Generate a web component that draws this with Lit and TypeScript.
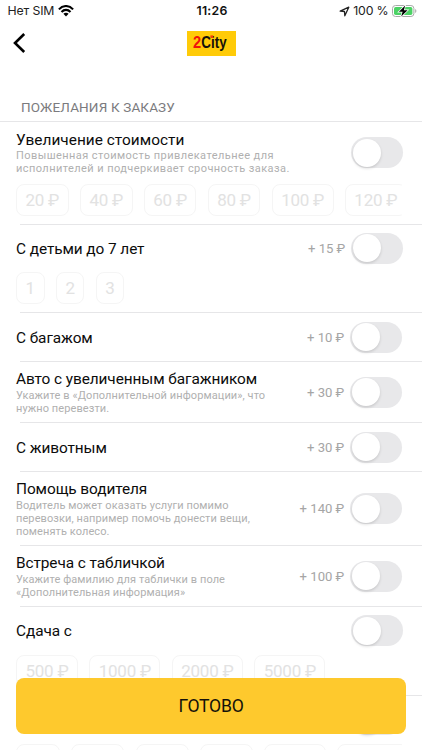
import { LitElement, html, css, svg, nothing } from "lit";
import { customElement, property } from "lit/decorators.js";

interface Option {
  title: string;
  note?: string[];
  price?: string;
  chips?: string[];
  height: number;
  /** Looser tracking for the emphasised first option. */
  loose?: boolean;
}

const OPTIONS: Option[] = [
  {
    title: "Увеличение стоимости",
    note: ["Повышенная стоимость привлекательнее для", "исполнителей и подчеркивает срочность заказа."],
    chips: ["20 ₽", "40 ₽", "60 ₽", "80 ₽", "100 ₽", "120 ₽"],
    height: 61,
    loose: true,
  },
  { title: "С детьми до 7 лет", price: "+ 15 ₽", chips: ["1", "2", "3"], height: 46 },
  { title: "С багажом", price: "+ 10 ₽", height: 48 },
  {
    title: "Авто с увеличенным багажником",
    note: ["Укажите в «Дополнительной информации», что", "нужно перевезти."],
    price: "+ 30 ₽",
    height: 60,
  },
  { title: "С животным", price: "+ 30 ₽", height: 48 },
  {
    title: "Помощь водителя",
    note: ["Водитель может оказать услуги помимо", "перевозки, например помочь донести вещи,", "поменять колесо."],
    price: "+ 140 ₽",
    height: 73,
  },
  {
    title: "Встреча с табличкой",
    note: ["Укажите фамилию для таблички в поле", "«Дополнительная информация»"],
    price: "+ 100 ₽",
    height: 60,
  },
  { title: "Сдача с", chips: ["500 ₽", "1000 ₽", "2000 ₽", "5000 ₽"], height: 47 },
  { title: "", chips: ["", "", "", "", "", ""], height: 47 },
];

@customElement("status-bar")
export class StatusBar extends LitElement {
  static styles = css`
    :host {
      display: grid;
      grid-template-columns: 1fr auto 1fr;
      align-items: center;
      height: 22px;
      padding: 0 5.5px 0 7.5px;
      font: 12.3px/22px Inter, "Liberation Sans", sans-serif;
      color: #222;
    }
    .side {
      display: flex;
      align-items: center;
    }
    .carrier {
      letter-spacing: -0.15px;
      margin-right: 4px;
    }
    .time {
      font-weight: 600;
      color: #111;
      letter-spacing: 0.25px;
    }
    .end {
      justify-content: flex-end;
    }
    .arrow {
      margin-right: 3.5px;
    }
    .percent {
      margin-right: 3px;
      letter-spacing: -0.15px;
    }
    svg {
      display: block;
    }
  `;

  render() {
    return html`
      <div class="side">
        <span class="carrier">Нет SIM</span>
        <svg width="16" height="12" viewBox="0 0 16 12">
          <g fill="none" stroke="#000" stroke-width="2.1">
            <path d="M.9 4.4C5-.1 11-.1 15.1 4.4" />
            <path d="M3.5 7C6.1 4.2 9.9 4.2 12.5 7" />
          </g>
          <path d="M5.4 8.7C6.9 7.3 9.1 7.3 10.6 8.7L8 11.4Z" />
        </svg>
      </div>
      <span class="time">11:26</span>
      <div class="side end">
        <svg class="arrow" width="11" height="11" viewBox="0 0 11 11">
          <path d="M1.2 5.2 9.8 1.2 5.8 9.8 5.5 5.5Z" fill="none" stroke="#222" stroke-width="1.3" stroke-linejoin="round" />
        </svg>
        <span class="percent">100 %</span>
        <svg width="25" height="12" viewBox="0 0 25 12">
          <rect x=".5" y=".5" width="21.4" height="11" rx="3" fill="#fff" stroke="#a9aaa9" />
          <rect x="2" y="2" width="18.4" height="8" rx="1.7" fill="#4cd265" />
          <path d="M23.2 4v4q1.2-.6 1.2-2t-1.2-2Z" fill="#a9aaa9" />
          <path d="M13.2.4 6.9 6.7h3.7L9.2 11.6l6.4-6.3h-3.7Z" stroke="#fff" stroke-width="1.4" paint-order="stroke" />
        </svg>
      </div>
    `;
  }
}

@customElement("brand-logo")
export class BrandLogo extends LitElement {
  static styles = css`
    :host {
      display: block;
      width: 49px;
      height: 25px;
    }
    svg {
      display: block;
    }
    text {
      font: 700 16.3px "Liberation Sans", sans-serif;
    }
  `;

  render() {
    return html`
      <svg width="49" height="25" viewBox="0 0 49 25">
        <rect width="49" height="25" fill="#ffcb08" />
        ${svg`
          <text x="6" y="17.2" textLength="8.2" lengthAdjust="spacingAndGlyphs" fill="#f0140a">2</text>
          <text x="14.3" y="17.2" textLength="25.3" lengthAdjust="spacingAndGlyphs" fill="#14110a">City</text>
        `}
        <path d="M23.4 4.4h2.8v2.6h-2.8Z" fill="#ee3a0a" />
      </svg>
    `;
  }
}

@customElement("toggle-switch")
export class ToggleSwitch extends LitElement {
  static styles = css`
    :host {
      display: block;
      flex: none;
      box-sizing: border-box;
      width: 52px;
      height: 31px;
      padding: 1.5px;
      border-radius: 16px;
      background: #e8e8ea;
    }
    .knob {
      width: 28px;
      height: 28px;
      border-radius: 50%;
      background: #fff;
      box-shadow: 0 1.5px 3px rgba(0, 0, 0, 0.14);
    }
  `;

  render() {
    return html`<div class="knob"></div>`;
  }
}

@customElement("option-row")
export class OptionRow extends LitElement {
  @property({ attribute: false }) option!: Option;

  static styles = css`
    :host {
      display: block;
      border-bottom: 1px solid transparent;
      background: linear-gradient(#e6e6e8, #e6e6e8) 20px 100% / 100% 1px no-repeat border-box;
    }
    .main {
      display: flex;
      align-items: center;
      padding: 0 19.7px 0 16px;
    }
    .main.plain {
      padding-right: 18.7px;
    }
    .text {
      flex: 1;
      white-space: nowrap;
    }
    .title {
      font-size: 15.4px;
      line-height: 19px;
      color: #0c0c0c;
      letter-spacing: -0.08px;
    }
    .title:only-child,
    .loose .title {
      padding-top: 1px;
      line-height: 18px;
    }
    .note {
      font-size: 11px;
      line-height: 13px;
      color: #b0b0b0;
      letter-spacing: 0.09px;
    }
    .loose .title {
      letter-spacing: 0.03px;
    }
    .loose .note {
      letter-spacing: 0.43px;
    }
    .price {
      font-size: 13.1px;
      color: #a5a5a5;
      margin-right: 6px;
      white-space: nowrap;
    }
    .chips {
      display: flex;
      gap: 11.3px;
      height: 32px;
      margin: 1px 20px 8px 16px;
      overflow: hidden;
    }
    .chip {
      flex: none;
      box-sizing: border-box;
      height: 32px;
      min-width: 28.6px;
      padding: 0 8.5px;
      border: 1px solid #f5f5f5;
      border-radius: 8px;
      font-size: 17px;
      line-height: 31px;
      letter-spacing: -0.25px;
      color: #e2e2e2;
    }
    .chip:empty {
      width: 53px;
    }
    .chip:empty:first-child {
      width: 44px;
    }
    .chip:empty:nth-child(5) {
      width: 62px;
    }
    .chip:empty:nth-child(6) {
      width: 72px;
    }
  `;

  render() {
    const { title, note, price, chips, height, loose } = this.option;
    return html`
      <div class="main ${chips ? "plain" : ""} ${loose ? "loose" : ""}" style="height:${height}px">
        <div class="text">
          <div class="title">${title}</div>
          ${note?.map((line) => html`<div class="note">${line}</div>`) ?? nothing}
        </div>
        ${price ? html`<span class="price">${price}</span>` : nothing}
        <toggle-switch></toggle-switch>
      </div>
      ${chips
        ? html`<div class="chips">
            ${chips.map((c) => (c ? html`<span class="chip">${c}</span>` : html`<span class="chip"></span>`))}
          </div>`
        : nothing}
    `;
  }
}

@customElement("app-root")
export class AppRoot extends LitElement {
  static styles = css`
    :host {
      display: block;
      position: relative;
      height: 750px;
      overflow: hidden;
      background: #fff;
      font-family: Roboto, "Liberation Sans", sans-serif;
    }
    .nav {
      display: grid;
      grid-template-columns: 1fr auto 1fr;
      height: 73px;
      padding: 9px 13px 0;
      box-sizing: border-box;
    }
    .back {
      display: block;
      margin-top: 2px;
    }
    .heading {
      height: 26px;
      padding: 0 21px;
      border-bottom: 1px solid #e6e6e8;
      font-size: 13.5px;
      line-height: 24px;
      letter-spacing: 0.15px;
      color: #7b7b7e;
    }
    .done {
      position: absolute;
      left: 16px;
      top: 678px;
      width: 390px;
      height: 56px;
      padding: 0;
      border: 0;
      border-radius: 8px;
      background: #fec92d;
      font: 17.6px/56px Roboto, "Liberation Sans", sans-serif;
      letter-spacing: -0.25px;
      color: #14110a;
    }
  `;

  render() {
    return html`
      <status-bar></status-bar>
      <div class="nav">
        <svg class="back" width="13" height="20" viewBox="0 0 13 20">
          <path d="M11.2 1 2 10l9.2 9" fill="none" stroke="#000" stroke-width="2.6" />
        </svg>
        <brand-logo></brand-logo>
      </div>
      <div class="heading">ПОЖЕЛАНИЯ К ЗАКАЗУ</div>
      ${OPTIONS.map((o) => html`<option-row .option=${o}></option-row>`)}
      <button class="done">ГОТОВО</button>
    `;
  }
}
